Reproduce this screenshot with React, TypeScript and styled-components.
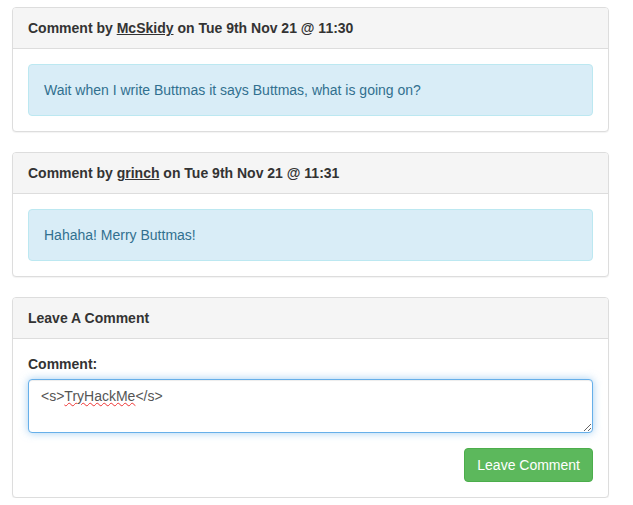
import React from "react";
import styled, { createGlobalStyle } from "styled-components";

const Global = createGlobalStyle`
  * { box-sizing: border-box; }
  html, body { margin: 0; padding: 0; background: #fff; }
  body {
    font-family: "Liberation Sans", Arial, Helvetica, sans-serif;
    font-size: 14px;
    line-height: 20px;
    color: #333;
  }
`;

const Page = styled.div`
  padding: 7px 0 0 12px;
  width: 609px;
  display: flex;
  flex-direction: column;
  gap: 20px;
`;

const Panel = styled.section`
  width: 597px;
  background: #fff;
  border: 1px solid #ddd;
  border-radius: 4px;
  box-shadow: 0 1px 1px rgba(0, 0, 0, 0.05);
`;

const PanelHeading = styled.div`
  padding: 10px 15px;
  background: #f5f5f5;
  border-bottom: 1px solid #ddd;
  border-radius: 3px 3px 0 0;
  font-weight: bold;
  color: #333;
`;

const UserLink = styled.a`
  color: #333;
  text-decoration: underline;
`;

const PanelBody = styled.div`
  padding: 15px;
`;

const Alert = styled.div`
  padding: 15px;
  border: 1px solid #bce8f1;
  border-radius: 4px;
  background: #d9edf7;
  color: #31708f;
`;

const FormGroup = styled.div`
  margin-bottom: 15px;
  display: flex;
  flex-direction: column;
`;

const Label = styled.label`
  font-weight: bold;
  margin-bottom: 5px;
`;

const TextBox = styled.div`
  height: 54px;
  padding: 6px 12px;
  border: 1px solid #66afe9;
  border-radius: 4px;
  color: #555;
  background: #fff;
  box-shadow: inset 0 1px 1px rgba(0, 0, 0, 0.075), 0 0 8px rgba(102, 175, 233, 0.6);
  overflow: auto;
  resize: vertical;
  outline: none;
  white-space: pre-wrap;
`;

const Misspelled = styled.span`
  text-decoration: underline wavy #e33;
  text-decoration-thickness: 1px;
  text-underline-offset: 1px;
`;

const Actions = styled.div`
  display: flex;
  justify-content: flex-end;
`;

const SuccessButton = styled.button`
  font-family: inherit;
  font-size: 14px;
  line-height: 20px;
  padding: 6px 12px;
  color: #fff;
  background: #5cb85c;
  border: 1px solid #4cae4c;
  border-radius: 4px;
  cursor: pointer;
`;

const comments = [
  { user: "McSkidy", date: "Tue 9th Nov 21 @ 11:30", text: "Wait when I write Buttmas it says Buttmas, what is going on?" },
  { user: "grinch", date: "Tue 9th Nov 21 @ 11:31", text: "Hahaha! Merry Buttmas!" },
];

export default function App() {
  return (
    <>
      <Global />
      <Page>
        {comments.map((c) => (
          <Panel key={c.user}>
            <PanelHeading>
              Comment by <UserLink href="#">{c.user}</UserLink> on {c.date}
            </PanelHeading>
            <PanelBody>
              <Alert>{c.text}</Alert>
            </PanelBody>
          </Panel>
        ))}
        <Panel>
          <PanelHeading>Leave A Comment</PanelHeading>
          <PanelBody>
            <FormGroup>
              <Label>Comment:</Label>
              <TextBox role="textbox" aria-multiline="true">
                {"<s>"}
                <Misspelled>TryHackMe</Misspelled>
                {"</s>"}
              </TextBox>
            </FormGroup>
            <Actions>
              <SuccessButton>Leave Comment</SuccessButton>
            </Actions>
          </PanelBody>
        </Panel>
      </Page>
    </>
  );
}
